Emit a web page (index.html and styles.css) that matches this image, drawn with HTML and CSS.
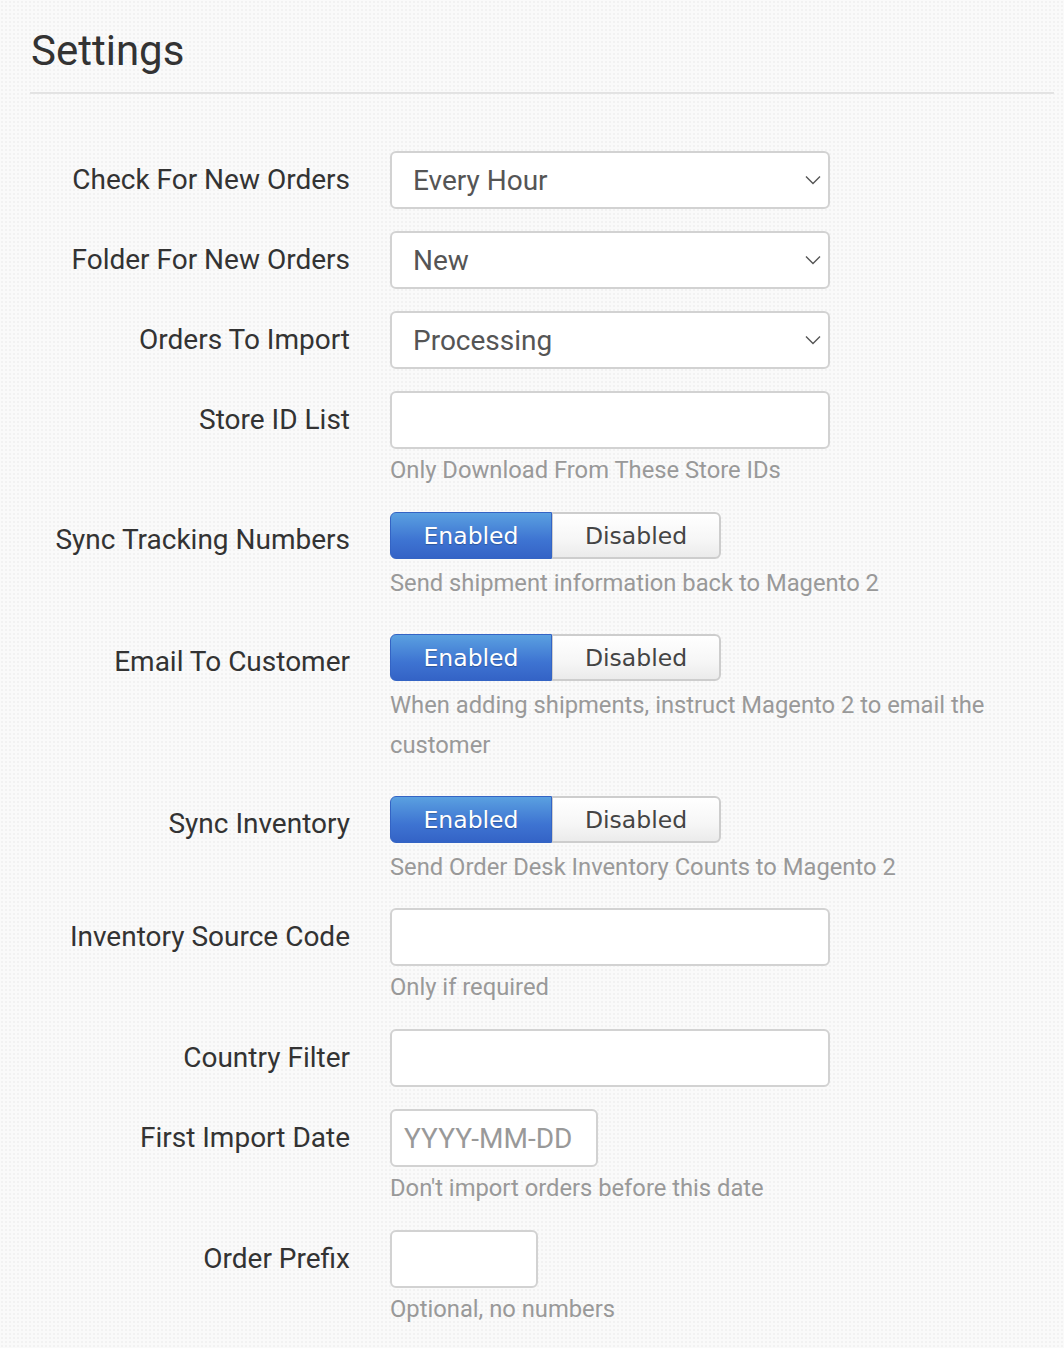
FILE: index.html
```html
<!DOCTYPE html>
<html lang="en">
<head>
    <meta charset="UTF-8">
    <title>Settings</title>
    <link rel="stylesheet" href="styles.css">
</head>
<body>
    <main class="page">
        <h1 class="page-title">Settings</h1>
        <form class="settings-form">
            <div class="form-row">
                <label class="form-label">Check For New Orders</label>
                <div class="form-control">
                    <div class="select-box">
                        <span>Every Hour</span>
                        <svg class="chevron" viewBox="0 0 16 10" width="16" height="10"><path d="M1 1.5 L8 8.5 L15 1.5" fill="none" stroke="#555" stroke-width="1.4"/></svg>
                    </div>
                </div>
            </div>
            <div class="form-row">
                <label class="form-label">Folder For New Orders</label>
                <div class="form-control">
                    <div class="select-box">
                        <span>New</span>
                        <svg class="chevron" viewBox="0 0 16 10" width="16" height="10"><path d="M1 1.5 L8 8.5 L15 1.5" fill="none" stroke="#555" stroke-width="1.4"/></svg>
                    </div>
                </div>
            </div>
            <div class="form-row">
                <label class="form-label">Orders To Import</label>
                <div class="form-control">
                    <div class="select-box">
                        <span>Processing</span>
                        <svg class="chevron" viewBox="0 0 16 10" width="16" height="10"><path d="M1 1.5 L8 8.5 L15 1.5" fill="none" stroke="#555" stroke-width="1.4"/></svg>
                    </div>
                </div>
            </div>
            <div class="form-row">
                <label class="form-label">Store ID List</label>
                <div class="form-control">
                    <div class="text-box"></div>
                    <div class="help">Only Download From These Store IDs</div>
                </div>
            </div>
            <div class="form-row row-loose">
                <label class="form-label label-toggle">Sync Tracking Numbers</label>
                <div class="form-control">
                    <div class="toggle">
                        <span class="toggle-btn on">Enabled</span>
                        <span class="toggle-btn off">Disabled</span>
                    </div>
                    <div class="help help-toggle">Send shipment information back to Magento 2</div>
                </div>
            </div>
            <div class="form-row row-loose">
                <label class="form-label label-toggle">Email To Customer</label>
                <div class="form-control">
                    <div class="toggle">
                        <span class="toggle-btn on">Enabled</span>
                        <span class="toggle-btn off">Disabled</span>
                    </div>
                    <div class="help help-toggle">When adding shipments, instruct Magento 2 to email the customer</div>
                </div>
            </div>
            <div class="form-row row-tight">
                <label class="form-label label-toggle">Sync Inventory</label>
                <div class="form-control">
                    <div class="toggle">
                        <span class="toggle-btn on">Enabled</span>
                        <span class="toggle-btn off">Disabled</span>
                    </div>
                    <div class="help help-toggle">Send Order Desk Inventory Counts to Magento 2</div>
                </div>
            </div>
            <div class="form-row">
                <label class="form-label">Inventory Source Code</label>
                <div class="form-control">
                    <div class="text-box"></div>
                    <div class="help">Only if required</div>
                </div>
            </div>
            <div class="form-row">
                <label class="form-label">Country Filter</label>
                <div class="form-control">
                    <div class="text-box"></div>
                </div>
            </div>
            <div class="form-row">
                <label class="form-label">First Import Date</label>
                <div class="form-control">
                    <div class="text-box box-date"><span class="placeholder">YYYY-MM-DD</span></div>
                    <div class="help">Don't import orders before this date</div>
                </div>
            </div>
            <div class="form-row">
                <label class="form-label">Order Prefix</label>
                <div class="form-control">
                    <div class="text-box box-prefix"></div>
                    <div class="help">Optional, no numbers</div>
                </div>
            </div>
        </form>
    </main>
</body>
</html>
```

FILE: styles.css
```css
html, body {
    margin: 0;
    padding: 0;
}
body {
    font-family: Roboto, "Liberation Sans", sans-serif;
    color: #333;
    background-color: #fafafa;
    background-image: radial-gradient(circle, #f2f2f2 1px, transparent 1.4px);
    background-size: 4px 4px;
}
.page {
    padding: 0 10px 0 30px;
}
.page-title {
    margin: 0;
    padding-top: 24px;
    padding-left: 1px;
    font-size: 42px;
    font-weight: 400;
    line-height: 54px;
    color: #333;
    height: 68px;
    border-bottom: 2px solid #e3e3e3;
}
.settings-form {
    padding-top: 57px;
}
.form-row {
    display: flex;
    align-items: flex-start;
    margin-bottom: 22px;
}
.form-row.row-loose {
    margin-bottom: 31px;
}
.form-row.row-tight {
    margin-bottom: 21px;
}
.form-label {
    width: 320px;
    flex-shrink: 0;
    text-align: right;
    font-size: 28px;
    line-height: 58px;
    color: #333;
    padding-right: 40px;
}
.form-label.label-toggle {
    line-height: 50px;
    padding-top: 3px;
}
.form-control {
    flex: 1;
}
.select-box,
.text-box {
    box-sizing: border-box;
    width: 440px;
    height: 58px;
    background: #fff;
    border: 2px solid #d2d2d2;
    border-radius: 6px;
    display: flex;
    align-items: center;
}
.select-box {
    justify-content: space-between;
    padding: 0 7px 0 21px;
    font-size: 28px;
    color: #555;
}
.chevron {
    display: block;
}
.text-box.box-date {
    width: 208px;
    padding-left: 12px;
}
.text-box.box-prefix {
    width: 148px;
}
.placeholder {
    font-size: 28px;
    color: #999;
}
.help {
    margin-top: 1px;
    font-size: 23.75px;
    line-height: 40px;
    color: #999;
    max-width: 620px;
}
.help.help-toggle {
    margin-top: 4px;
}
.toggle {
    display: flex;
    height: 47px;
    font-family: "DejaVu Sans", Verdana, sans-serif;
    font-size: 23.5px;
}
.toggle-btn {
    box-sizing: border-box;
    height: 47px;
    display: flex;
    align-items: center;
    justify-content: center;
}
.toggle-btn.on {
    width: 162px;
    color: #fff;
    background: linear-gradient(to bottom, #5aa0e0, #3e74d2 60%, #3463c6);
    border: 1px solid #3464c4;
    border-radius: 6px 0 0 6px;
    text-shadow: 0 1px 1px rgba(0,0,0,0.25);
}
.toggle-btn.off {
    width: 169px;
    color: #444;
    background: linear-gradient(to bottom, #ffffff, #f6f6f6 60%, #ebebeb);
    border: 2px solid #cdcdcd;
    border-left-width: 1px;
    border-radius: 0 6px 6px 0;
}
```
